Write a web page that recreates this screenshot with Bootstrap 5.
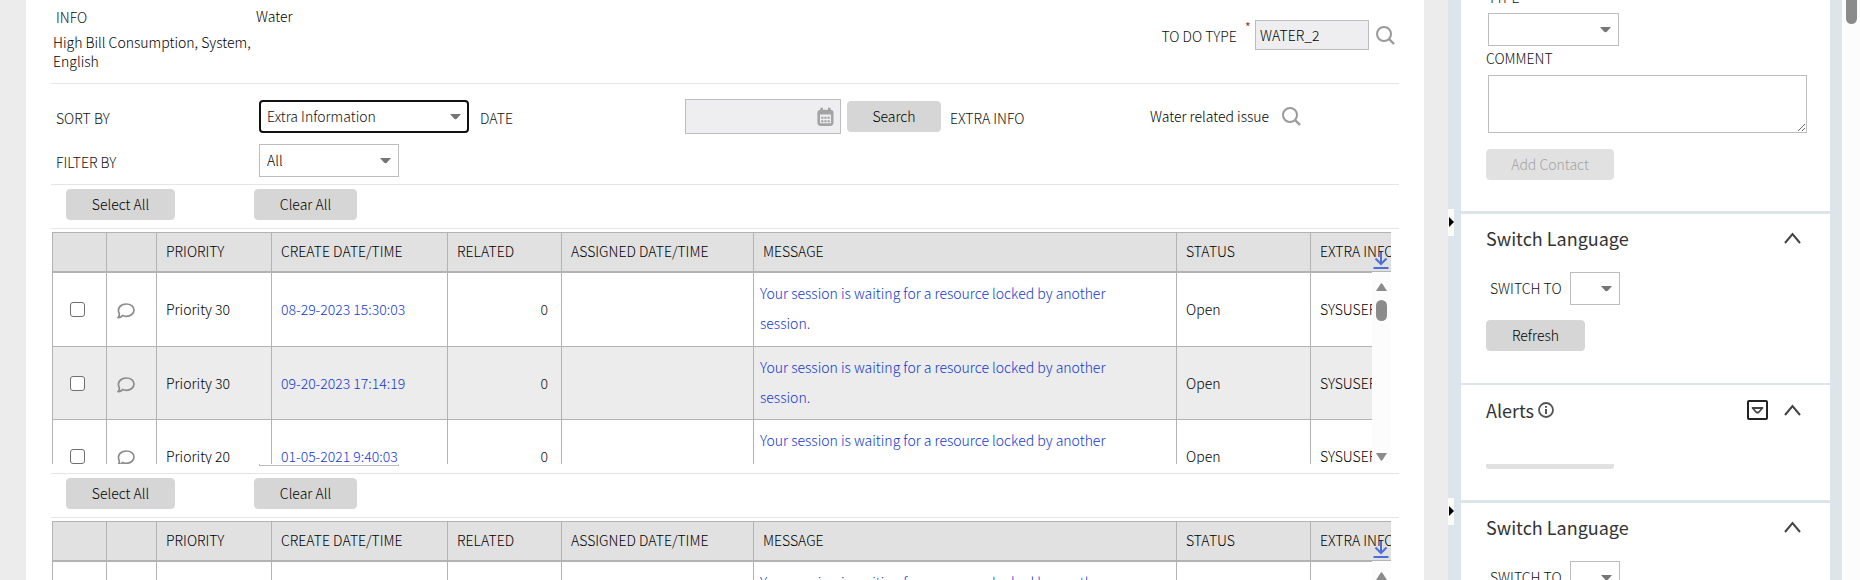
<!DOCTYPE html>
<html lang="en">
<head>
<meta charset="utf-8">
<meta name="viewport" content="width=device-width, initial-scale=1">
<title>To Do Management</title>
<link href="https://cdn.jsdelivr.net/npm/bootstrap@5.3.0/dist/css/bootstrap.min.css" rel="stylesheet">
<style>
body{font-family:"Noto Sans CJK SC","Open Sans",sans-serif;font-size:14px;font-weight:300;line-height:19px;color:#000;background:#ececec}
.btn,input,select,textarea{font-weight:300}
.page-main{background:#fff;margin-left:26px;margin-right:24px;padding:0 25px;min-width:0}
.rule{border-bottom:1px solid #e5e5e5}
.lbl{color:#111;padding-left:5px;white-space:nowrap}
.top-zone{height:84px}
.info-col{width:205px;padding-top:8px}
.info-text{padding:6px 0 0 2px}
.req{color:#8c2000;font-size:14px;line-height:14px}
.fld{border:1px solid #bdbdbd;border-radius:0;background:#fff;color:#000;font-size:14px;line-height:19px;padding:0 4px}
.fld.readonly{background:#eeeef0}
.sel{appearance:none;height:33px;border:1px solid #bdbdbd;border-radius:0;font-size:14px;line-height:19px;padding:0 24px 0 7px;color:#000;
background:#fff url("data:image/svg+xml,%3Csvg xmlns='http://www.w3.org/2000/svg' width='11' height='6'%3E%3Cpath d='M0 0h11L7 4.6q-1.500 1.300-3 0z' fill='%23757575'/%3E%3C/svg%3E") no-repeat right 7px center}
.sel.active{border:2px solid #111;border-radius:4px;color:#111;padding-left:6px;background-position:right 6px center}
.btn-g{--bs-btn-bg:#d6d6d6;--bs-btn-hover-bg:#c8c8c8;--bs-btn-border-color:#d6d6d6;--bs-btn-color:#000;--bs-btn-padding-x:0;--bs-btn-padding-y:0;--bs-btn-font-size:14px;--bs-btn-line-height:19px;--bs-btn-border-radius:4px;--bs-btn-disabled-bg:#e1e1e1;--bs-btn-disabled-border-color:#e1e1e1;--bs-btn-disabled-color:#a3a3a3;--bs-btn-disabled-opacity:1;--bs-btn-font-weight:300;height:31px}
.icon-btn{border:0;background:none;padding:0;display:flex}
.action-bar{height:44px;padding:4px 0 0 15px;gap:79px}
.w-select{width:109px}.w-clear{width:103px}
.grid-wrap{position:relative;overflow:hidden;height:232px;margin:3px 8px 0 1px}
.todo{table-layout:fixed;width:calc(100% + 60px);border-collapse:separate;border-spacing:0}
.todo th,.todo td{border-left:1px solid #b3b3b3;border-bottom:1px solid #b3b3b3;padding:0 9px;font-weight:300;vertical-align:middle;white-space:nowrap}
.todo th{height:41px;background:#e1e1e1;color:#000;border-top:1px solid #b3b3b3;border-bottom-width:2px;padding-bottom:1px}
.todo td{height:73px}
.todo tr:first-child td{height:74px}
.todo tr:nth-child(even) td{background:#ececec}
.todo td.msg{white-space:normal;line-height:30px;padding:0 50px 3px 6px}
.todo td.pick{padding-left:17px}
.todo td.note{padding-left:10px}
.todo a{color:#1237d0;text-decoration:none}
.todo td.num{text-align:right;padding-right:13px;color:#111}
.todo .form-check-input{width:15px;height:15px;margin:0;border:1px solid #6f6f6f;border-radius:3px;display:block}
.grid-scroll{position:absolute;right:0;top:39px;bottom:0;width:19px;background:#fcfcfc;border-top:1px solid #b3b3b3;padding:11px 4px 3px}
.grid-scroll i{display:block;width:11px;height:21px;border-radius:6px;background:#8b8b8b;margin-top:9px}
.dl-icon{position:absolute;right:2px;top:20px;color:#4a6fdc}
.edge{width:140px;height:2px;margin-left:208px;border:1px solid #bdbdbd;border-top:0}
.splitter{width:13px;background:#dde5ec;padding-top:209px;gap:262px}
.splitter button{width:6px;height:27px;background:#fbfbf7;border:0;padding:0 0 2px;display:flex;align-items:center}
.side{width:369px;background:#dce6ea}
.panel{background:#fff;padding:0 25px}
.panel h2{font-size:18px;line-height:26px;font-weight:400;color:#333;margin:0}
.panel .lbl{padding-left:0}
.gutter{width:12px;background:#dde5ea}
.page-scroll{width:18px;background:#fcfcfc;padding-left:4px}
.page-scroll i{display:block;width:11px;height:24px;border-radius:0 0 6px 6px;background:#8b8b8b}
</style>
</head>
<body>
<svg width="0" height="0" class="position-absolute" aria-hidden="true">
<symbol id="lens" viewBox="0 0 19 19"><circle cx="8" cy="8" r="7" fill="none" stroke="#9a9a9a" stroke-width="2"/><path d="M13 13l5 5" stroke="#9a9a9a" stroke-width="2.400"/></symbol>
<symbol id="bubble" viewBox="0 0 18 16"><path d="M2.200 10.500C-.2 5.500 3.500 1 9.200 1c4.400 0 7.800 2.400 7.800 6s-3.400 6.300-7.800 6.300c-1.500 0-2.700-.2-3.700-.7C4.300 14 3 14.700 1.200 14.500 2.200 13.500 2.500 12 2.200 10.500z" fill="none" stroke="#8c8c8c" stroke-width="1.700"/></symbol>
<symbol id="download" viewBox="0 0 16 18"><path d="M8 0v12M2.500 6.500L8 12l5.500-5.500" fill="none" stroke="currentColor" stroke-width="2"/><path d="M.5 16h15" stroke="currentColor" stroke-width="2"/></symbol>
<symbol id="chev" viewBox="0 0 17 12"><path d="M1 11l7.500-9L16 11" fill="none" stroke="#444" stroke-width="2"/></symbol>
<symbol id="up" viewBox="0 0 11 8"><path d="M0 8L4.500 1q1-1.300 2 0L11 8z" fill="#8b8b8b"/></symbol>
</svg>
<div class="d-flex vh-100 overflow-hidden">
<main class="page-main flex-grow-1">
  <section class="top-zone rule d-flex justify-content-between">
    <div class="d-flex">
      <div class="info-col">
        <div class="lbl">INFO</div>
        <div class="info-text">High Bill Consumption, System, English</div>
      </div>
      <div style="padding-top:7px">Water</div>
    </div>
    <div class="d-flex align-items-start" style="padding:20px 4px 0 0">
      <label class="lbl" for="todoType" style="padding-top:7px;margin-right:4px">TO DO TYPE</label>
      <span class="req mx-1">*</span>
      <input id="todoType" class="fld readonly" style="width:114px;height:30px" value="WATER_2" readonly>
      <button class="icon-btn" type="button" aria-label="Find type" style="margin:6px 0 0 7px"><svg width="19" height="19"><use href="#lens"/></svg></button>
    </div>
  </section>

  <form class="rule" style="height:101px;padding-top:15px">
    <div class="d-flex align-items-center" style="height:35px">
      <label class="lbl pt-1" for="sortBy" style="width:208px">SORT BY</label>
      <select id="sortBy" class="sel active" style="width:210px"><option>Extra Information</option></select>
      <label class="lbl pt-1" for="date" style="width:210px;margin-left:6px">DATE</label>
      <div class="fld readonly d-flex align-items-center" style="width:156px;height:35px;padding-right:6px">
        <input id="date" class="border-0 bg-transparent flex-grow-1 p-0" style="min-width:0" readonly>
        <svg width="20" height="22" viewBox="0 0 20 22"><rect x="2" y="4" width="16" height="16" rx="2.500" fill="none" stroke="#a3a3a3" stroke-width="3"/><path d="M1 4h18v4H1zM4 0h3v5H4zM13 0h3v5h-3z" fill="#a3a3a3"/><path d="M5 12h10M5 16h10" stroke="#a3a3a3" stroke-width="2.400" stroke-dasharray="2.600 1.100"/></svg>
      </div>
      <button class="btn btn-g" type="button" style="width:94px;margin-left:6px">Search</button>
      <span class="lbl pt-1 ms-1" style="width:205px">EXTRA INFO</span>
      <span>Water related issue</span>
      <button class="icon-btn" type="button" aria-label="Find extra info" style="margin-left:13px"><svg width="19" height="19"><use href="#lens"/></svg></button>
    </div>
    <div class="d-flex align-items-center" style="margin-top:10px">
      <label class="lbl pt-1" for="filterBy" style="width:208px">FILTER BY</label>
      <select id="filterBy" class="sel" style="width:140px"><option>All</option></select>
    </div>
  </form>

  <div class="action-bar rule d-flex">
    <button class="btn btn-g w-select" type="button">Select All</button>
    <button class="btn btn-g w-clear" type="button">Clear All</button>
  </div>
  <div class="grid-wrap">
    <table class="todo">
      <colgroup><col style="width:54px"><col style="width:50px"><col style="width:115px"><col style="width:176px"><col style="width:114px"><col style="width:192px"><col><col style="width:134px"><col style="width:141px"></colgroup>
      <thead><tr><th></th><th></th><th>PRIORITY</th><th>CREATE DATE/TIME</th><th>RELATED</th><th>ASSIGNED DATE/TIME</th><th>MESSAGE</th><th>STATUS</th><th>EXTRA INFO</th></tr></thead>
      <tbody>
      <tr><td class="pick"><input class="form-check-input" type="checkbox" aria-label="Select row 1"></td><td class="note"><svg width="18" height="16"><use href="#bubble"/></svg></td><td>Priority 30</td><td><a href="#">08-29-2023 15:30:03</a></td><td class="num">0</td><td></td><td class="msg"><a href="#">Your session is waiting for a resource locked by another session.</a></td><td>Open</td><td>SYSUSER</td></tr>
      <tr><td class="pick"><input class="form-check-input" type="checkbox" aria-label="Select row 2"></td><td class="note"><svg width="18" height="16"><use href="#bubble"/></svg></td><td>Priority 30</td><td><a href="#">09-20-2023 17:14:19</a></td><td class="num">0</td><td></td><td class="msg"><a href="#">Your session is waiting for a resource locked by another session.</a></td><td>Open</td><td>SYSUSER</td></tr>
      <tr><td class="pick"><input class="form-check-input" type="checkbox" aria-label="Select row 3"></td><td class="note"><svg width="18" height="16"><use href="#bubble"/></svg></td><td>Priority 20</td><td><a href="#">01-05-2021 9:40:03</a></td><td class="num">0</td><td></td><td class="msg"><a href="#">Your session is waiting for a resource locked by another session.</a></td><td>Open</td><td>SYSUSER</td></tr>
      </tbody>
    </table>
    <div class="grid-scroll d-flex flex-column"><svg width="11" height="8"><use href="#up"/></svg><i></i><svg class="mt-auto" width="11" height="8" viewBox="0 0 11 8"><path d="M0 0L4.500 7q1 1.300 2 0L11 0z" fill="#8b8b8b"/></svg></div>
    <a class="dl-icon" href="#" aria-label="Download"><svg class="d-block" width="16" height="18"><use href="#download"/></svg></a>
  </div>
  <div class="edge"></div>
  <div class="rule" style="height:8px"></div>
  <div class="action-bar rule d-flex">
    <button class="btn btn-g w-select" type="button">Select All</button>
    <button class="btn btn-g w-clear" type="button">Clear All</button>
  </div>
  <div class="grid-wrap">
    <table class="todo">
      <colgroup><col style="width:54px"><col style="width:50px"><col style="width:115px"><col style="width:176px"><col style="width:114px"><col style="width:192px"><col><col style="width:134px"><col style="width:141px"></colgroup>
      <thead><tr><th></th><th></th><th>PRIORITY</th><th>CREATE DATE/TIME</th><th>RELATED</th><th>ASSIGNED DATE/TIME</th><th>MESSAGE</th><th>STATUS</th><th>EXTRA INFO</th></tr></thead>
      <tbody>
      <tr><td></td><td></td><td></td><td></td><td></td><td></td><td class="msg"><a href="#">Your session is waiting for a resource locked by another session.</a></td><td></td><td></td></tr>
      </tbody>
    </table>
    <div class="grid-scroll"><svg class="d-block" width="11" height="8"><use href="#up"/></svg></div>
    <a class="dl-icon" href="#" aria-label="Download"><svg class="d-block" width="16" height="18"><use href="#download"/></svg></a>
  </div>
</main>

<div class="splitter d-flex flex-column flex-shrink-0">
  <button type="button" aria-label="Collapse"><svg width="6" height="10"><path d="M1 0l5 5-5 5z"/></svg></button>
  <button type="button" aria-label="Collapse"><svg width="6" height="10"><path d="M1 0l5 5-5 5z"/></svg></button>
</div>
<aside class="side flex-shrink-0">
  <section class="panel" style="height:211px">
    <div style="height:13px" class="d-flex align-items-end"><label class="lbl" for="ctype" style="padding-left:2px;margin-bottom:6px">TYPE</label></div>
    <select id="ctype" class="sel d-block" style="width:131px;margin-left:2px"><option></option></select>
    <label class="lbl d-block" for="comment" style="padding:3px 0 7px">COMMENT</label>
    <textarea id="comment" class="fld d-block" style="width:319px;height:58px;margin-left:2px"></textarea>
    <button class="btn btn-g mt-3" type="button" style="width:128px" disabled>Add Contact</button>
  </section>
  <section class="panel" style="height:169px;margin-top:3px;padding-top:11px">
    <div class="d-flex justify-content-between align-items-center pe-1"><h2>Switch Language</h2><button class="icon-btn" type="button" aria-label="Collapse section"><svg width="17" height="12"><use href="#chev"/></svg></button></div>
    <div class="d-flex align-items-center ps-1" style="margin-top:21px"><label class="lbl" for="sw1" style="width:80px">SWITCH TO</label><select id="sw1" class="sel" style="width:50px"><option></option></select></div>
    <button class="btn btn-g" type="button" style="width:99px;margin-top:15px">Refresh</button>
  </section>
  <section class="panel" style="height:115px;margin-top:2px;padding-top:12px">
    <div class="d-flex align-items-center pe-1">
      <h2>Alerts</h2>
      <svg class="ms-1" width="16" height="16" viewBox="0 0 16 16"><circle cx="8" cy="8" r="7" fill="none" stroke="#555" stroke-width="1.800"/><path d="M8 7v5M8 4v1.800" stroke="#555" stroke-width="2"/></svg>
      <button class="icon-btn ms-auto me-3" type="button" aria-label="Options"><svg width="21" height="20" viewBox="0 0 21 20"><rect x="1" y="1" width="19" height="18" rx="1" fill="none" stroke="#222" stroke-width="2"/><path d="M5.500 8h10l-4 4.500h-2z" fill="none" stroke="#444" stroke-width="1.800" stroke-linejoin="round"/></svg></button>
      <button class="icon-btn" type="button" aria-label="Collapse section"><svg width="17" height="12"><use href="#chev"/></svg></button>
    </div>
    <div style="width:128px;height:5px;margin-top:41px;background:#e1e1e1;border-radius:0 0 3px 3px"></div>
  </section>
  <section class="panel" style="height:169px;margin-top:3px;padding-top:11px">
    <div class="d-flex justify-content-between align-items-center pe-1"><h2>Switch Language</h2><button class="icon-btn" type="button" aria-label="Collapse section"><svg width="17" height="12"><use href="#chev"/></svg></button></div>
    <div class="d-flex align-items-center ps-1" style="margin-top:21px"><label class="lbl" for="sw2" style="width:80px">SWITCH TO</label><select id="sw2" class="sel" style="width:50px"><option></option></select></div>
  </section>
</aside>
<div class="gutter flex-shrink-0"></div>
<div class="page-scroll flex-shrink-0"><i></i></div>
</div>
<script src="https://cdn.jsdelivr.net/npm/bootstrap@5.3.0/dist/js/bootstrap.bundle.min.js"></script>
</body>
</html>
